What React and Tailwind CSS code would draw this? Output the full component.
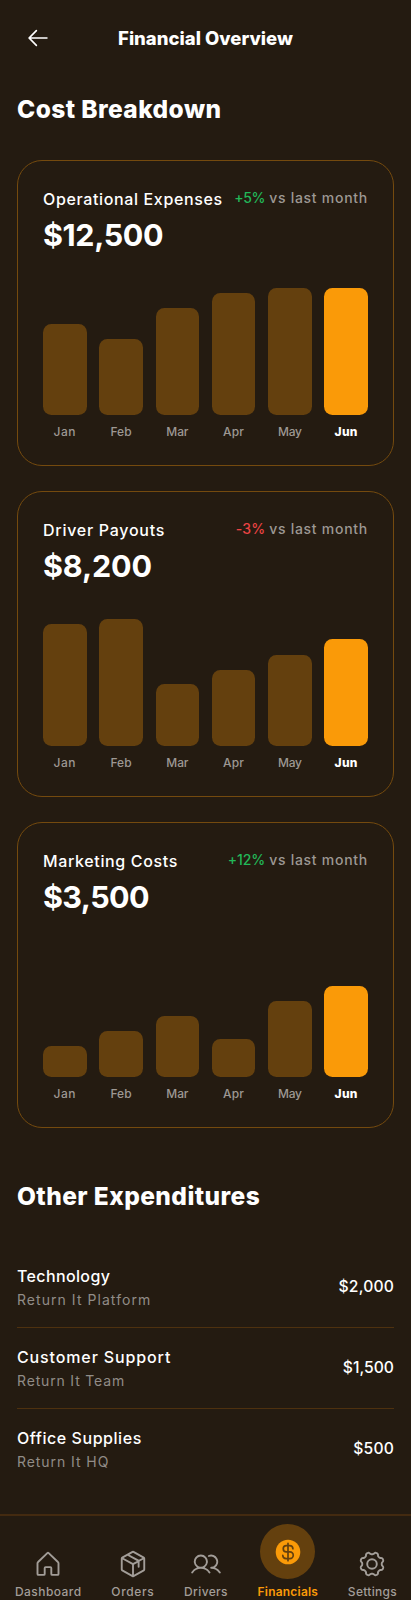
import React from "react";
import { PiArrowLeft, PiPackage, PiUsers } from "react-icons/pi";

const months = [
  ["Jan", "tracking-[0.5px]"],
  ["Feb", "tracking-[0.1px]"],
  ["Mar", "tracking-[-0.1px]"],
  ["Apr", "tracking-[0.2px]"],
  ["May", "tracking-[-0.3px]"],
  ["Jun", "tracking-[0.3px]"],
];

const cards = [
  { title: "Operational Expenses", titleCls: "tracking-[0.64px]", amount: "$12,500", amountCls: "tracking-[-0.4px]", delta: "+5%", deltaCls: "text-[#22b858] tracking-[-0.3px]", bars: [91, 76, 107, 122, 127, 127] },
  { title: "Driver Payouts", titleCls: "tracking-[0.73px]", amount: "$8,200", amountCls: "tracking-[-0.13px]", delta: "-3%", deltaCls: "text-[#ea4343] tracking-[0.1px]", bars: [122, 127, 62, 76, 91, 107] },
  { title: "Marketing Costs", titleCls: "tracking-[0.64px]", amount: "$3,500", amountCls: "tracking-[-0.6px]", delta: "+12%", deltaCls: "text-[#22b858] tracking-[-0.1px]", bars: [31, 46, 61, 38, 76, 91] },
];

const rows = [
  { name: "Technology", nameCls: "tracking-[0.37px]", sub: "Return It Platform", subCls: "tracking-[1.05px]", amount: "$2,000", amountCls: "tracking-[0.15px]" },
  { name: "Customer Support", nameCls: "tracking-[0.87px]", sub: "Return It Team", subCls: "tracking-[0.83px]", amount: "$1,500", amountCls: "tracking-[0px]" },
  { name: "Office Supplies", nameCls: "tracking-[0.55px]", sub: "Return It HQ", subCls: "tracking-[0.93px]", amount: "$500", amountCls: "tracking-[0.15px]" },
];

function HouseIcon() {
  return (
    <svg width="30" height="30" viewBox="0 0 30 30" fill="none" stroke="currentColor" strokeWidth="1.9" strokeLinejoin="round">
      <path d="M14.3 4.1a1 1 0 0 1 1.4 0l9.2 8.9a1.8 1.8 0 0 1 .6 1.3V25a.9.9 0 0 1-.9.9h-5.4a.9.9 0 0 1-.9-.9v-6a.9.9 0 0 0-.9-.9h-4.8a.9.9 0 0 0-.9.9v6a.9.9 0 0 1-.9.9H5.4a.9.9 0 0 1-.9-.9V14.3A1.8 1.8 0 0 1 5.1 13Z" />
    </svg>
  );
}

// Eight rounded teeth around the hub.
const gearPath =
  Array.from({ length: 128 }, (_, i) => {
    const t = (i / 128) * Math.PI * 2;
    const wave = -Math.cos(8 * t);
    const r = 10.8 + 1.15 * Math.tanh(1.6 * wave);
    return `${i ? "L" : "M"}${(15 + r * Math.cos(t)).toFixed(2)} ${(15 + r * Math.sin(t)).toFixed(2)}`;
  }).join("") + "Z";

function GearIcon() {
  return (
    <svg width="30" height="30" viewBox="0 0 30 30" fill="none" stroke="currentColor" strokeWidth="1.9" strokeLinejoin="round">
      <path d={gearPath} />
      <circle cx="15" cy="15" r="4.8" />
    </svg>
  );
}

function DollarIcon() {
  return (
    <svg width="30" height="30" viewBox="-15 -15 30 30" fill="none">
      <circle r="12.3" fill="currentColor" />
      <path
        d="M0-8.7V8.7M4.900-3.200A3.300 3.300 0 0 0 1.600-6.400H-1.600A3.150 3.150 0 0 0-1.600-.1H1.900A3.350 3.350 0 0 1 1.900 6.600H-1.900A3.350 3.350 0 0 1-5.250 3.300"
        stroke="#64400e"
        strokeWidth="1.7"
        strokeLinecap="round"
      />
    </svg>
  );
}

const PackageIcon = () => <PiPackage size={30} />;
const UsersIcon = () => <PiUsers size={30} />;

const tabs = [
  { label: "Dashboard", cls: "tracking-[0.44px]", Icon: HouseIcon },
  { label: "Orders", cls: "tracking-[0.65px]", Icon: PackageIcon },
  { label: "Drivers", cls: "tracking-[0.35px]", Icon: UsersIcon },
  { label: "Financials", cls: "tracking-[0.2px]", Icon: DollarIcon, active: true },
  { label: "Settings", cls: "tracking-[0.29px]", Icon: GearIcon },
];

function CostCard({ title, titleCls, amount, amountCls, delta, deltaCls, bars }) {
  return (
    <section className="h-[306px] rounded-[25px] border border-[#744a0e] px-[25px] pt-[25px]">
      <div className="flex items-start justify-between whitespace-nowrap">
        <h3 className={`text-[16px] leading-[26px] font-medium ${titleCls}`}>{title}</h3>
        <p className="flex gap-1 text-[14px] leading-6 font-medium text-[#9d9893]">
          <span className={deltaCls}>{delta}</span>
          <span className="tracking-[0.73px]">vs last month</span>
        </p>
      </div>
      <p className={`text-[30.5px] leading-[46px] font-bold ${amountCls}`}>{amount}</p>
      <div className="mt-[30px] grid h-[127px] grid-cols-6 items-end gap-x-[12.65px]">
        {bars.map((h, i) => (
          <div key={i} className={`rounded-[8.4px] ${i === 5 ? "bg-[#fa9a08]" : "bg-[#64400e]"}`} style={{ height: h }} />
        ))}
      </div>
      <div className="mt-2 grid grid-cols-6 gap-x-[12.65px] text-center text-[12px] leading-[18px]">
        {months.map(([m, cls], i) => (
          <span key={m} className={`${cls} ${i === 5 ? "font-extrabold text-white" : "font-medium text-[#9d9893]"}`}>{m}</span>
        ))}
      </div>
    </section>
  );
}

export default function App() {
  return (
    <div className="flex h-[1600px] w-full flex-col overflow-hidden bg-[#241b11] font-['Inter',sans-serif] text-white">
      <header className="grid h-[76px] shrink-0 grid-cols-[1fr_auto_1fr] items-center px-[25px]">
        <PiArrowLeft size={26} />
        <h1 className="text-[18.5px] leading-6 font-extrabold">Financial Overview</h1>
      </header>

      <main className="grow px-[17px] pt-[17px]">
        <h2 className="text-[24.5px] leading-8 font-extrabold tracking-[0.42px]">Cost Breakdown</h2>
        <div className="mt-[35px] flex flex-col gap-[25px]">
          {cards.map((c) => <CostCard key={c.title} {...c} />)}
        </div>

        <h2 className="mt-[52px] text-[24.5px] leading-8 font-extrabold tracking-[0.42px]">Other Expenditures</h2>
        <ul className="mt-[35px]">
          {rows.map((r, i) => (
            <li key={r.name} className={`flex h-[81px] items-center justify-between border-b ${i < 2 ? "border-[#4e310f]" : "border-transparent"}`}>
              <div>
                <p className={`text-[16px] leading-[26px] font-medium ${r.nameCls}`}>{r.name}</p>
                <p className={`text-[14px] leading-[22px] text-[#918c87] ${r.subCls}`}>{r.sub}</p>
              </div>
              <p className={`text-[15.7px] leading-6 font-medium ${r.amountCls}`}>{r.amount}</p>
            </li>
          ))}
        </ul>
      </main>

      <nav className="flex h-[86px] shrink-0 items-end justify-between border-t-2 border-[#432a10] pr-[14px] pl-[15px]">
        {tabs.map(({ label, cls, Icon, active }) => (
          <a key={label} className={`flex flex-col items-center gap-[5px] text-[12px] leading-4 ${active ? "font-semibold text-[#fa9a08]" : "font-medium text-[#a29d98]"}`}>
            {active ? (
              <span className="flex size-[55px] items-center justify-center rounded-full bg-[#64400e]">
                <Icon />
              </span>
            ) : (
              <Icon />
            )}
            <span className={cls}>{label}</span>
          </a>
        ))}
      </nav>
    </div>
  );
}
